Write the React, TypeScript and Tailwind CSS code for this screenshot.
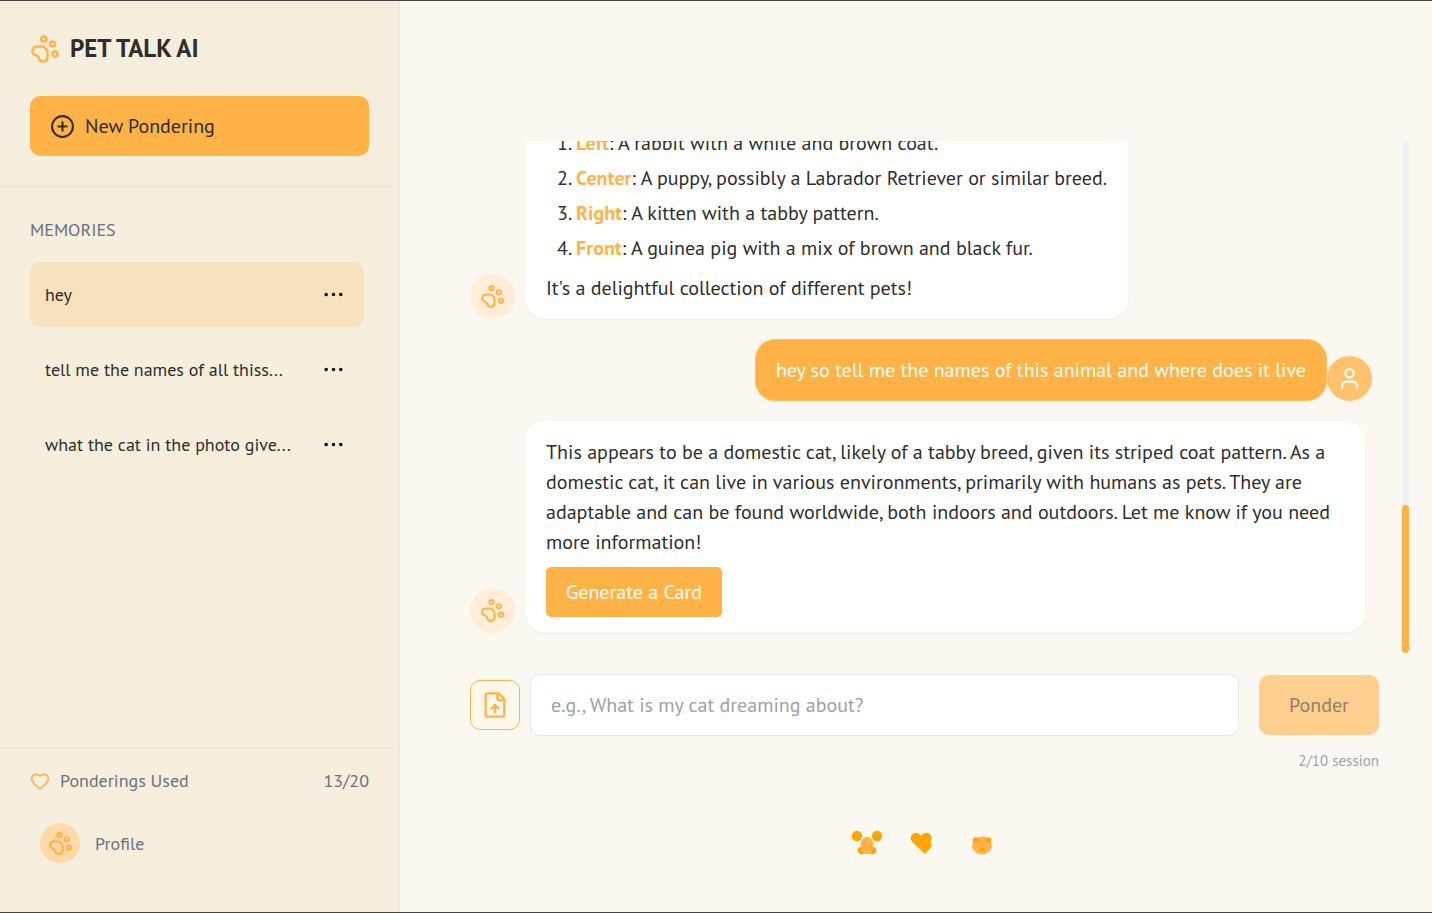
import { CirclePlus, Ellipsis, Heart, PawPrint, User } from 'lucide-react';

const memories = [
  { id: 1, title: 'hey', active: true },
  { id: 2, title: 'tell me the names of all thiss...', active: false },
  { id: 3, title: 'what the cat in the photo give...', active: false },
];

const pets = [
  { position: 'Left', text: 'A rabbit with a white and brown coat.' },
  { position: 'Center', text: 'A puppy, possibly a Labrador Retriever or similar breed.' },
  { position: 'Right', text: 'A kitten with a tabby pattern.' },
  { position: 'Front', text: 'A guinea pig with a mix of brown and black fur.' },
];

function BotAvatar() {
  return (
    <div className="flex size-[45px] shrink-0 items-center justify-center rounded-full bg-[#ffedd8]">
      <PawPrint size={25} className="text-[#ffb347]" />
    </div>
  );
}

function UploadIcon() {
  return (
    <svg
      width="28"
      height="28"
      viewBox="0 0 24 24"
      fill="none"
      stroke="currentColor"
      strokeWidth="2"
      strokeLinecap="round"
      strokeLinejoin="round"
    >
      <path d="M15 2H6a2 2 0 0 0-2 2v16a2 2 0 0 0 2 2h12a2 2 0 0 0 2-2V7Z" />
      <path d="M14 2v4a2 2 0 0 0 2 2h4" />
      <path d="M12 12v6" />
      <path d="m15 15-3-3-3 3" />
    </svg>
  );
}

function Sidebar() {
  return (
    <aside className="flex w-[400px] shrink-0 flex-col border-r border-gray-200 bg-[#f5eedc]">
      {/* Logo + new chat */}
      <div className="border-b border-gray-200 p-[30px]">
        <div className="flex items-center gap-2.5">
          <PawPrint size={30} className="text-[#ffb347]" />
          <h1 className="text-[25px] leading-[35px] font-bold text-[#2d2d2d]">PET TALK AI</h1>
        </div>
        <button className="mt-[30px] flex h-15 w-full items-center gap-2.5 rounded-[10px] bg-[#ffb347] px-5 text-xl">
          <CirclePlus size={25} />
          New Pondering
        </button>
      </div>

      {/* Memories */}
      <nav className="flex-1 px-[30px] pt-[30px]">
        <h2 className="mb-5 text-lg leading-[25px] text-gray-500">MEMORIES</h2>
        <ul className="mr-[5px] flex flex-col gap-2.5">
          {memories.map((memory) => (
            <li
              key={memory.id}
              className={`flex h-[65px] items-center justify-between rounded-[10px] px-[15px] ${
                memory.active ? 'bg-[#f7e2bd]' : ''
              }`}
            >
              <a href="#" className="text-lg">{memory.title}</a>
              <button aria-label="Memory options" className="mr-[3px] text-black">
                <Ellipsis size={25} strokeWidth={1.4} />
              </button>
            </li>
          ))}
        </ul>
      </nav>

      {/* Usage + profile */}
      <div className="border-t border-gray-200 px-[30px] pt-5 pb-[39px] text-lg leading-[25px] text-gray-500">
        <div className="flex items-center justify-between">
          <span className="flex items-center gap-2.5">
            <Heart size={20} className="text-[#ffb347]" />
            Ponderings Used
          </span>
          <span>13/20</span>
        </div>
        <a href="#" className="mt-5 flex items-center gap-[15px] p-2.5">
          <span className="flex size-10 items-center justify-center rounded-full bg-[#ffd8a8]">
            <PawPrint size={25} className="text-[#ffb347]" />
          </span>
          Profile
        </a>
      </div>
    </aside>
  );
}

function Messages() {
  return (
    <div className="flex min-h-0 flex-1">
      <div className="flex min-w-0 flex-1 flex-col justify-end gap-5 overflow-hidden px-[30px] pb-5">
        <div className="flex shrink-0 items-end gap-2.5">
          <BotAvatar />
          <div className="max-w-[840px] rounded-[20px] border border-[#fffefb] bg-[#fffffd] px-5 py-[15px] shadow-xs">
            <ol className="mb-2.5 list-decimal space-y-[5px] pl-[30px]">
              {pets.map((pet) => (
                <li key={pet.position}>
                  <strong className="text-[#ffb347]">{pet.position}</strong>: {pet.text}
                </li>
              ))}
            </ol>
            <p>It's a delightful collection of different pets!</p>
          </div>
        </div>

        <div className="flex shrink-0 items-end justify-end">
          <div className="max-w-[840px] rounded-[20px] border border-[#ffbe62] bg-[#ffb347] px-5 py-[15px] text-white shadow-xs">
            hey so tell me the names of this animal and where does it live
          </div>
          <div className="flex size-[45px] shrink-0 items-center justify-center rounded-full bg-[#fec26c]">
            <User size={25} className="text-white" />
          </div>
        </div>

        <div className="flex shrink-0 items-end gap-2.5">
          <BotAvatar />
          <div className="max-w-[840px] rounded-[20px] border border-[#fffefb] bg-[#fffffd] px-5 py-[15px] shadow-xs">
            <p>
              This appears to be a domestic cat, likely of a tabby breed, given its striped coat pattern. As a
              domestic cat, it can live in various environments, primarily with humans as pets. They are
              adaptable and can be found worldwide, both indoors and outdoors. Let me know if you need more
              information!
            </p>
            <button className="mt-2.5 h-[50px] rounded-[5px] bg-[#ffb347] px-5 text-white">Generate a Card</button>
          </div>
        </div>
      </div>

      {/* Scrollbar */}
      <div className="flex w-[7px] flex-col justify-end bg-[#f1f1f1]">
        <div className="h-[148px] rounded-full bg-[#ffb347]" />
      </div>
    </div>
  );
}

function PetDoodles() {
  return (
    <div className="flex items-center justify-center pt-[57px] pb-14">
      <svg width="150" height="28" viewBox="0 0 150 28">
        {/* Dog */}
        <g fill="#ffa500">
          <circle cx="7" cy="8" r="5.2" />
          <circle cx="27" cy="8" r="5.2" />
          <circle cx="11.5" cy="22.5" r="3.7" />
          <circle cx="22.5" cy="22.5" r="3.7" />
        </g>
        <ellipse cx="17" cy="17.5" rx="6.4" ry="8.8" fill="#ffb347" />

        {/* Heart */}
        <g fill="#ffa500">
          <circle cx="66" cy="10" r="5.3" />
          <circle cx="76.3" cy="10" r="5.3" />
          <circle cx="77.6" cy="17" r="4" />
          <path d="M62.2 13.700L66 8h10l5 11L75.800 25.300Q75 26.200 74 25.300Z" />
        </g>

        {/* Cat */}
        <ellipse cx="132" cy="17.5" rx="10" ry="9" fill="#ffb347" />
        <g fill="#ffa500">
          <circle cx="125.5" cy="12" r="2.7" />
          <circle cx="138.5" cy="12" r="2.7" />
          <ellipse cx="132" cy="21.5" rx="2.5" ry="2" />
        </g>
      </svg>
    </div>
  );
}

export default function App() {
  return (
    <div className="flex h-screen border-y border-[#444] bg-[#fbf8f1] font-['PT_Sans','Noto_Sans',sans-serif] text-[#2d2d2d]">
      <Sidebar />
      <main className="flex min-w-0 flex-1 flex-col pt-[140px] pr-[23px] pl-10 text-xl leading-[30px]">
        <Messages />
        <form className="border-t border-[#fdfaf5] px-[30px] pt-5">
          <div className="flex items-center">
            <button
              type="button"
              aria-label="Upload a photo"
              className="flex size-[50px] shrink-0 items-center justify-center rounded-[10px] border border-[#ffb347] bg-[#fff6ec] text-[#ffb347]"
            >
              <UploadIcon />
            </button>
            <input
              type="text"
              aria-label="Your question"
              placeholder="e.g., What is my cat dreaming about?"
              className="ml-2.5 h-[62px] min-w-0 flex-1 rounded-[10px] border border-gray-200 bg-white px-5 placeholder:text-gray-400"
            />
            <button
              type="submit"
              disabled
              className="ml-5 h-15 w-[120px] rounded-[10px] bg-[#fdce8c] text-[#8f8068]"
            >
              Ponder
            </button>
          </div>
          <p className="mt-[15px] text-right text-[15px] leading-5 text-gray-400">2/10 session</p>
        </form>
        <PetDoodles />
      </main>
    </div>
  );
}
